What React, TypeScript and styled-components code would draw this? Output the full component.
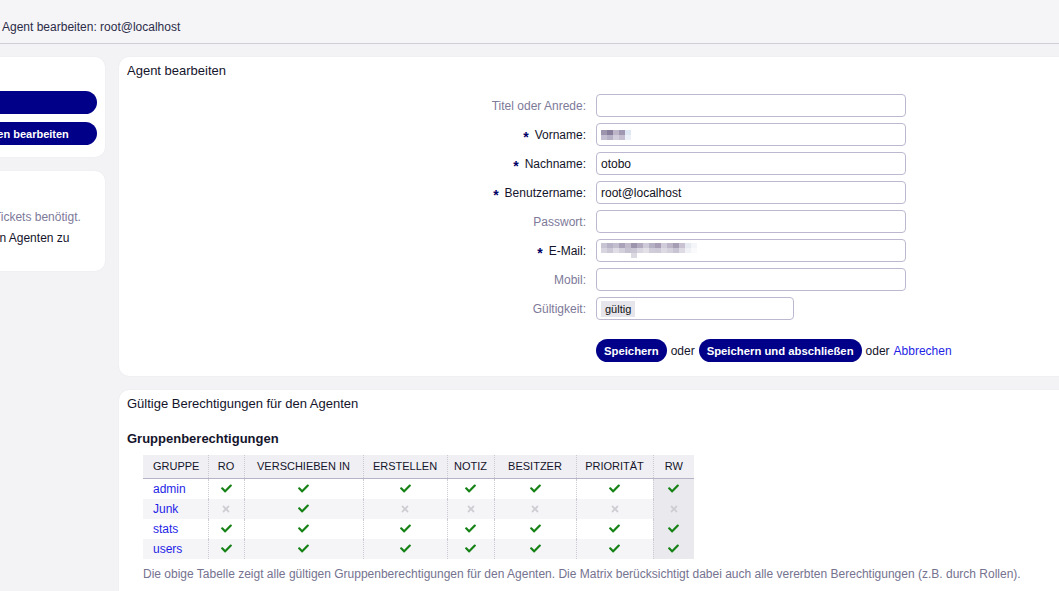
import React from "react";
import styled, { createGlobalStyle } from "styled-components";
import { FaCheck, FaTimes } from "react-icons/fa";

const GlobalStyle = createGlobalStyle`
  html, body {
    margin: 0;
    padding: 0;
    background: #f3f3f6;
    overflow: hidden;
  }
  body {
    font-family: "Liberation Sans", Arial, sans-serif;
    font-size: 12px;
    color: #14142b;
  }
`;

const Breadcrumb = styled("header")`
  box-sizing: border-box;
  height: 44px;
  padding: 20px 2px 0;
  border-bottom: 1px solid #cfcfd9;
  background: #f5f5f8;
  font-size: 12px;
  line-height: 14px;
  color: #2c2c48;
`;

const Layout = styled("div")`
  display: flex;
  gap: 14px;
  padding-top: 13px;
  margin-left: -144px;
`;

const Sidebar = styled("aside")`
  width: 249px;
  flex-shrink: 0;
  display: flex;
  flex-direction: column;
  gap: 14px;
`;

const SideBox = styled("section")<{ $gap?: number }>`
  background: #fff;
  border-radius: 10px;
  padding: 9px 8px ${(p) => (p.$gap ? "10px" : "12px")};
  box-shadow: 0 0 2px rgba(40, 40, 80, 0.06);

  h2 {
    margin-bottom: ${(p) => (p.$gap ? `${p.$gap}px` : "7px")};
  }
`;

const SideTitle = styled("h2")`
  margin: 0;
  font-size: 13px;
  font-weight: normal;
  line-height: 18px;
`;

const SideButton = styled("button")`
  display: block;
  width: 100%;
  height: 23px;
  margin-bottom: 8px;
  border: 0;
  border-radius: 12px;
  background: #000088;
  color: #fff;
  font-family: inherit;
  font-size: 11px;
  font-weight: bold;
  text-align: center;
  white-space: nowrap;
  &:last-child {
    margin-bottom: 0;
  }
`;

const SideLine = styled("p")<{ $muted?: boolean }>`
  margin: 0;
  white-space: nowrap;
  line-height: 15px;
  color: ${(p) => (p.$muted ? "#7d7a99" : "#14142b")};
  margin-bottom: ${(p) => (p.$muted ? "6px" : "0")};
`;

const Main = styled("main")`
  width: 1000px;
  flex-shrink: 0;
  display: flex;
  flex-direction: column;
  gap: 14px;
`;

const Panel = styled("section")<{ $height?: number }>`
  background: #fff;
  border-radius: 10px;
  padding: 6px 8px 14px;
  box-shadow: 0 0 2px rgba(40, 40, 80, 0.06);
  ${(p) => (p.$height ? `min-height: ${p.$height}px;` : "")}
`;

const PanelTitle = styled("h1")`
  margin: 0;
  font-size: 13px;
  font-weight: normal;
  line-height: 16px;
`;

const FormGrid = styled("div")`
  display: grid;
  grid-template-columns: 459px 310px;
  grid-auto-rows: 23px;
  column-gap: 10px;
  row-gap: 6px;
  margin-top: 15px;
`;

const Label = styled("label")<{ $required?: boolean }>`
  display: flex;
  align-items: center;
  justify-content: flex-end;
  font-size: 12px;
  color: ${(p) => (p.$required ? "#14142b" : "#7d7a99")};
`;

const Star = styled("span")`
  margin-right: 6px;
  font-weight: bold;
  font-size: 14px;
  color: #000066;
  position: relative;
  top: 2px;
`;

const TextBox = styled("div")<{ $width?: number }>`
  box-sizing: border-box;
  width: ${(p) => (p.$width ? `${p.$width}px` : "100%")};
  height: 23px;
  display: flex;
  align-items: center;
  padding: 0 4px;
  border: 1px solid #bdb8cf;
  border-radius: 4px;
  background: #fff;
  font-size: 12px;
  color: #111122;
`;

const Chip = styled("span")`
  background: #e5e5eb;
  padding: 2px 4px;
  font-size: 11px;
  color: #111;
`;

const PixelGrid = styled("span")<{ $cols: number; $w: number }>`
  display: grid;
  grid-template-columns: repeat(${(p) => p.$cols}, ${(p) => p.$w}px);
  grid-auto-rows: 5px;
`;

const Pixel = styled("span")<{ $c: string }>`
  background: ${(p) => p.$c};
`;

const Actions = styled("div")`
  display: flex;
  align-items: center;
  gap: 4px;
  margin: 19px 0 0 469px;
  font-size: 12px;
`;

const PrimaryButton = styled("button")`
  height: 23px;
  padding: 0 8px;
  border: 0;
  border-radius: 12px;
  background: #000088;
  color: #fff;
  font-family: inherit;
  font-size: 11.3px;
  font-weight: bold;
`;

const Link = styled("a")`
  color: #1f1fe6;
  text-decoration: none;
`;

const SubTitle = styled("h3")`
  margin: 19px 0 8px;
  font-size: 13px;
  font-weight: bold;
  line-height: 16px;
`;

const Table = styled("table")`
  margin-left: 16px;
  border-collapse: collapse;
  font-size: 12px;
`;

const Th = styled("th")<{ $w: number; $left?: boolean }>`
  width: ${(p) => p.$w}px;
  height: 23px;
  padding: 0;
  box-sizing: border-box;
  font-size: 11px;
  font-weight: normal;
  text-transform: uppercase;
  color: #14142b;
  background: #f0f0f4;
  border-bottom: 1px solid #b5b3c6;
  text-align: ${(p) => (p.$left ? "left" : "center")};
  padding-left: ${(p) => (p.$left ? "10px" : "0")};
  & + & {
    border-left: 1px dotted #cbcbd3;
  }
`;

const Tr = styled("tr")<{ $alt?: boolean }>`
  background: ${(p) => (p.$alt ? "#f5f5f8" : "#fff")};
`;

const Td = styled("td")<{ $left?: boolean; $rw?: boolean }>`
  height: 20px;
  padding: 0;
  padding-left: ${(p) => (p.$left ? "10px" : "0")};
  text-align: ${(p) => (p.$left ? "left" : "center")};
  vertical-align: middle;
  line-height: 0;
  ${(p) => (p.$rw ? "background: #e9e9ee;" : "")}
  & + & {
    border-left: 1px dotted #cbcbd3;
  }
  a {
    line-height: 14px;
  }
`;

const Note = styled("p")`
  margin: 8px 0 0 16px;
  font-size: 12px;
  color: #75738f;
`;

const vornamePixels = [
  "#9d94ae", "#877e9c", "#bdb5c8", "#a097b2", "#dfe7f4",
  "#c5c0d1", "#b7b1c5", "#d2cddb", "#c4bed0", "#ecf1f9",
];

const mailPixels = [
  "#c9c4d4", "#b8b2c6", "#c4bfcf", "#a9a2b8", "#c0bacb", "#9c94ad", "#b2abbf", "#cfcad8", "#b6b0c4", "#a89fb6", "#d0ccda", "#bbb5c7", "#a69eb5", "#c8c2d2", "#e8eaf2", "#f4f5f9",
  "#d8d5e0", "#cdc9d6", "#e0dde6", "#d3cfdb", "#c7c2d1", "#cbc6d4", "#d9d6e1", "#e3e0e8", "#d0ccd9", "#cfcad8", "#dddae4", "#d4d0dc", "#c9c4d3", "#dedbe5", "#f0f1f6", "#fafafc",
  "#ffffff", "#ffffff", "#ffffff", "#ffffff", "#ffffff", "#dcd9e2", "#ffffff", "#ffffff", "#ffffff", "#ffffff", "#ffffff", "#ffffff", "#ffffff", "#ffffff", "#ffffff", "#ffffff",
];

type FieldRow = {
  label: string;
  required?: boolean;
  value?: React.ReactNode;
  width?: number;
};

const fields: FieldRow[] = [
  { label: "Titel oder Anrede:" },
  {
    label: "Vorname:",
    required: true,
    value: (
      <PixelGrid $cols={5} $w={6}>
        {vornamePixels.map((c, i) => (
          <Pixel key={i} $c={c} />
        ))}
      </PixelGrid>
    ),
  },
  { label: "Nachname:", required: true, value: "otobo" },
  { label: "Benutzername:", required: true, value: "root@localhost" },
  { label: "Passwort:" },
  {
    label: "E-Mail:",
    required: true,
    value: (
      <PixelGrid $cols={16} $w={6}>
        {mailPixels.map((c, i) => (
          <Pixel key={i} $c={c} />
        ))}
      </PixelGrid>
    ),
  },
  { label: "Mobil:" },
  { label: "Gültigkeit:", value: <Chip>gültig</Chip>, width: 198 },
];

const columns = [
  { key: "GRUPPE", w: 65 },
  { key: "RO", w: 36 },
  { key: "VERSCHIEBEN IN", w: 119 },
  { key: "ERSTELLEN", w: 84 },
  { key: "NOTIZ", w: 47 },
  { key: "BESITZER", w: 82 },
  { key: "PRIORITÄT", w: 77 },
  { key: "RW", w: 41 },
];

const groups: { name: string; perms: boolean[] }[] = [
  { name: "admin", perms: [true, true, true, true, true, true, true] },
  { name: "Junk", perms: [false, true, false, false, false, false, false] },
  { name: "stats", perms: [true, true, true, true, true, true, true] },
  { name: "users", perms: [true, true, true, true, true, true, true] },
];

const Mark = ({ on }: { on: boolean }) =>
  on ? (
    <FaCheck size={11} color="#168216" />
  ) : (
    <FaTimes size={10} color="#cdcdd2" />
  );

export default function App() {
  return (
    <>
      <GlobalStyle />
      <Breadcrumb>Agent bearbeiten: root@localhost</Breadcrumb>

      <Layout>
        <Sidebar>
          <SideBox>
            <SideTitle>Aktionen</SideTitle>
            <SideButton>Zurück</SideButton>
            <SideButton>Benutzereinstellungen bearbeiten</SideButton>
          </SideBox>

          <SideBox $gap={12}>
            <SideTitle>Hinweis</SideTitle>
            <SideLine $muted>Agenten werden für alle Tickets benötigt.</SideLine>
            <SideLine>Vergessen Sie nicht, einen Agenten zu</SideLine>
            <SideLine>Gruppen hinzuzufügen!</SideLine>
          </SideBox>
        </Sidebar>

        <Main>
          <Panel>
            <PanelTitle>Agent bearbeiten</PanelTitle>
            <FormGrid>
              {fields.map((f) => (
                <React.Fragment key={f.label}>
                  <Label $required={f.required}>
                    {f.required && <Star>*</Star>}
                    {f.label}
                  </Label>
                  <TextBox $width={f.width}>{f.value}</TextBox>
                </React.Fragment>
              ))}
            </FormGrid>
            <Actions>
              <PrimaryButton>Speichern</PrimaryButton>
              oder
              <PrimaryButton>Speichern und abschließen</PrimaryButton>
              oder
              <Link href="#">Abbrechen</Link>
            </Actions>
          </Panel>

          <Panel $height={220}>
            <PanelTitle>Gültige Berechtigungen für den Agenten</PanelTitle>
            <SubTitle>Gruppenberechtigungen</SubTitle>
            <Table>
              <thead>
                <tr>
                  {columns.map((c, i) => (
                    <Th key={c.key} $w={c.w} $left={i === 0}>
                      {c.key}
                    </Th>
                  ))}
                </tr>
              </thead>
              <tbody>
                {groups.map((g, r) => (
                  <Tr key={g.name} $alt={r % 2 === 1}>
                    <Td $left>
                      <Link href="#">{g.name}</Link>
                    </Td>
                    {g.perms.map((p, i) => (
                      <Td key={i} $rw={i === g.perms.length - 1}>
                        <Mark on={p} />
                      </Td>
                    ))}
                  </Tr>
                ))}
              </tbody>
            </Table>
            <Note>
              Die obige Tabelle zeigt alle gültigen Gruppenberechtigungen für den
              Agenten. Die Matrix berücksichtigt dabei auch alle vererbten
              Berechtigungen (z.B. durch Rollen).
            </Note>
          </Panel>
        </Main>
      </Layout>
    </>
  );
}
